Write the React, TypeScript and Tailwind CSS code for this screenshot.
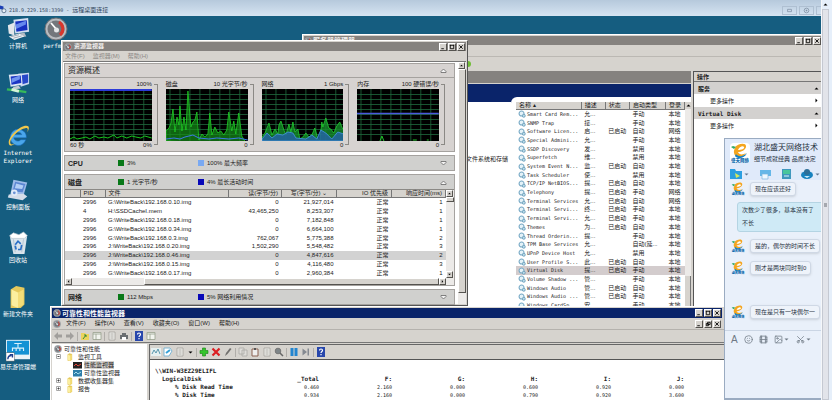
import type { ReactNode } from 'react'
import { Film, Image as ImageIcon, Scissors, Smile } from 'lucide-react'

const services = [
  ['Smart Card Rem...', '允...', '', '手动', '本地'],
  ['SNMP Trap', '接...', '', '手动', '本地'],
  ['Software Licen...', '启...', '已启动', '自动', '网络'],
  ['Special Admini...', '允...', '', '手动', '本地'],
  ['SSDP Discovery', '发...', '', '禁用', '本地'],
  ['Superfetch', '维...', '', '禁用', '本地'],
  ['System Event N...', '监...', '已启动', '自动', '本地'],
  ['Task Scheduler', '使...', '', '禁用', '本地'],
  ['TCP/IP NetBIOS...', '提...', '已启动', '自动', '本地'],
  ['Telephony', '提...', '已启动', '手动', '网络'],
  ['Terminal Services', '允...', '已启动', '自动', '网络'],
  ['Terminal Servi...', '终...', '已启动', '手动', '本地'],
  ['Terminal Servi...', '允...', '已启动', '手动', '本地'],
  ['Themes', '为...', '已启动', '自动', '本地'],
  ['Thread Orderin...', '提...', '', '手动', '本地'],
  ['TPM Base Services', '允...', '', '自动(延...', '本地'],
  ['UPnP Device Host', '允...', '', '禁用', '本地'],
  ['User Profile S...', '此...', '已启动', '自动', '本地'],
  ['Virtual Disk', '提...', '已启动', '手动', '本地'],
  ['Volume Shadow ...', '管...', '', '手动', '本地'],
  ['Windows Audio', '管...', '已启动', '自动', '本地'],
  ['Windows Audio ...', '管...', '已启动', '手动', '本地'],
  ['Windows CardSp...', '安...', '', '手动', '本地'],
]

const diskRows = [
  ['2996', 'G:\\WriteBack\\192.168.0.10.img', '0', '21,927,014', '1'],
  ['4', 'H:\\SSDCacheI.mem', '43,465,250', '8,253,307', '1'],
  ['2996', 'G:\\WriteBack\\192.168.0.18.img', '0', '7,182,848', '1'],
  ['2996', 'G:\\WriteBack\\192.168.0.34.img', '0', '6,664,100', '1'],
  ['2996', 'G:\\WriteBack\\192.168.0.3.img', '762,067', '5,775,388', '2'],
  ['2996', 'J:\\WriteBack\\192.168.0.20.img', '1,502,290', '5,548,482', '3'],
  ['2996', 'J:\\WriteBack\\192.168.0.46.img', '0', '4,847,616', '2'],
  ['2996', 'J:\\WriteBack\\192.168.0.15.img', '0', '4,116,480', '3'],
  ['2996', 'G:\\WriteBack\\192.168.0.17.img', '0', '2,960,384', '1'],
]

const raised = 'bg-[#d6d3ce] border border-t-white border-l-white border-r-[#55534f] border-b-[#55534f]'

function CaptionButtons({ restore = false }: { restore?: boolean }) {
  const shapes = [
    { label: '最小化', d: 'M1.5 5.5h3' },
    { label: '最大化', d: restore ? 'M3 1.5h3v2.5h-3zM1.5 3h2.5v2.5h-2.5z' : 'M1 1.5h5M1.5 1v4.5h4V1' },
    { label: '关闭', d: 'M1.5 1.5l4 4M5.5 1.5l-4 4' },
  ]
  return (
    <div className="flex shrink-0 gap-px">
      {shapes.map((s) => (
        <button key={s.label} aria-label={s.label} className={`h-2 w-2 ${raised}`}>
          <svg viewBox="0 0 7 7" className="block h-full w-full" fill="none" stroke="#000" strokeWidth="1">
            <path d={s.d} />
          </svg>
        </button>
      ))}
    </div>
  )
}

function Arrow({ dir, className = '' }: { dir: 'up' | 'down' | 'left' | 'right'; className?: string }) {
  const d = {
    up: 'M1.5 4.5h4L3.500 2.500z',
    down: 'M1.5 2.500h4L3.500 4.500z',
    left: 'M4.500 1.500v4L2.500 3.500z',
    right: 'M2.500 1.500v4L4.500 3.500z',
  }[dir]
  return (
    <svg viewBox="0 0 7 7" className={`h-[7px] w-[7px] shrink-0 ${className}`}>
      <path d={d} />
    </svg>
  )
}

function GaugeIcon({ className = '' }: { className?: string }) {
  return (
    <svg viewBox="0 0 24 24" className={`shrink-0 ${className}`}>
      <circle cx="12" cy="12" r="11" fill="#b9bcc0" stroke="#6b6f74" />
      <circle cx="12" cy="12" r="8.5" fill="#73777c" />
      <path d="M15 5a8 8 0 0 1 1 13" fill="none" stroke="#d9362c" strokeWidth="3" />
      <path d="M7 6l6 7" stroke="#fff" strokeWidth="1.8" />
      <circle cx="12.500" cy="13" r="2.500" fill="#e4e6e8" />
    </svg>
  )
}

function ComputerIcon({ network = false }: { network?: boolean }) {
  return (
    <svg viewBox="0 0 26 26" className="h-6 w-6">
      {network ? (
        <>
          <path d="M13 3l12-1v12l-9 3z" fill="#c9d7ee" />
          <path d="M15 5l9-1.500v9l-7 2z" fill="#2747c9" />
          <path d="M3 4l14-1 1 12-13 2z" fill="#dce6f4" />
          <path d="M5 6l11-1 .6 8-10.600 1.800z" fill="#1b35c4" />
          <path d="M6 8l9-3v4l-9 4z" fill="#6f92ef" />
          <path d="M8 17l6-1 2 3-9 1z" fill="#c4cad3" />
          <path d="M1 20l9 1 12 2" stroke="#36b95a" strokeWidth="2.500" fill="none" />
          <path d="M6 20l8 2" stroke="#d4f4d8" strokeWidth="3" />
        </>
      ) : (
        <>
          <path d="M2 9l7-3v14l-6-2z" fill="#e3e6ea" />
          <path d="M8 3l16-2 1 15-15 2z" fill="#d2ddf0" />
          <path d="M10 5l12.500-1.500.8 10.500-12 2z" fill="#172fc0" />
          <path d="M10.500 8l11-4v4l-10.600 5z" fill="#6688ee" />
          <path d="M14 18l6-1 2 4-9 1z" fill="#b3bac4" />
          <path d="M3 21l11-3 6 3-11 4z" fill="#eef1f4" />
          <path d="M5 21.500l9-2.300M8 23l9-2.500" stroke="#9ba5b1" />
        </>
      )}
    </svg>
  )
}

function IeIcon() {
  return (
    <svg viewBox="0 0 26 26" className="h-6 w-6">
      <path d="M22 15H8.500c.3 3 5 5 7.500 2h5.500c-2 5-6 7-10 6-5-1-8-6-6.500-11C6.500 7 11 5 15 6c5 1 7.500 5 7 9zM9 11.500h8c-.5-3-6.500-4-8 0z" fill="#4aa6ea" stroke="#1467b8" strokeWidth=".6" />
      <path d="M4 23C-1 18 13 2 22 2c4 0 3 4 1 7 1-3 1-5-2-4.500C14 5 2 17 5 21.500c1 1.500 4 0 6-1-3 2-6 3.500-7 2.500z" fill="#f2c84b" />
    </svg>
  )
}

function PanelIcon() {
  return (
    <svg viewBox="0 0 26 26" className="h-6 w-6">
      <path d="M8 2l15 3-4 14-15 2z" fill="#9dbbe8" />
      <path d="M10 4l11 2.500-3 9-11-1z" fill="#5b86d2" />
      <path d="M11 6l8 2-1.500 4-8-1z" fill="#b3cff5" />
      <path d="M3 18l16-1 4 3-5 4-16-3z" fill="#d5dde9" />
      <circle cx="9" cy="16" r="3.500" fill="#e2ebf8" />
      <circle cx="9" cy="16" r="1.500" fill="#6b92d4" />
    </svg>
  )
}

function BinIcon() {
  return (
    <svg viewBox="0 0 26 26" className="h-6 w-6">
      <path d="M4 5h19l-3 20H8z" fill="#d9e4ec" />
      <path d="M4 5l4-3 6 2 5-3 4 4-3 3H6z" fill="#fff" stroke="#aebdc9" strokeWidth=".7" />
      <path d="M8 9l2 14M19 9l-2 14" stroke="#b3c3d0" />
      <path d="M10 15l3-4 3 3M17 15l-1 5h-3M11 20l-1-4" stroke="#2b70c7" strokeWidth="1.800" fill="none" />
    </svg>
  )
}

function FolderIcon({ className = 'h-6 w-6' }: { className?: string }) {
  return (
    <svg viewBox="0 0 26 26" className={`shrink-0 ${className}`}>
      <path d="M5 5l6-4 9 2v18l-4 4H5z" fill="#e5c95c" />
      <path d="M6 5l7 3v17l-7-3z" fill="#fbef9f" />
      <path d="M13 8l6-3v16l-6 4z" fill="#f3dd78" />
    </svg>
  )
}

function ShortcutIcon() {
  return (
    <svg viewBox="0 0 26 26" className="h-6 w-6">
      <rect x="0" y="2" width="26" height="21" fill="#e9f3f8" />
      <rect x="1" y="3" width="24" height="15" fill="#1492d4" />
      <path d="M9 6h8M13 6v5M7 14v-3h12v3M11 11v3M15 11v3" stroke="#d9f1fc" strokeWidth="1.200" fill="none" />
      <rect x="0" y="16" width="9" height="9" fill="#fff" stroke="#555" strokeWidth=".5" />
      <path d="M2 23c0-3 1-4 4-4M4 18h3v3" stroke="#1e3f8f" strokeWidth="1.500" fill="none" />
    </svg>
  )
}

const desktopIcons: { label: string; icon: ReactNode }[] = [
  { label: '计算机', icon: <ComputerIcon /> },
  { label: '网络', icon: <ComputerIcon network /> },
  { label: 'Internet Explorer', icon: <IeIcon /> },
  { label: '控制面板', icon: <PanelIcon /> },
  { label: '回收站', icon: <BinIcon /> },
  { label: '新建文件夹', icon: <FolderIcon /> },
  { label: '易乐游管理端', icon: <ShortcutIcon /> },
]

function DesktopIcon({ label, icon }: { label: string; icon: ReactNode }) {
  return (
    <button className="flex w-9 flex-col items-center gap-px text-white">
      {icon}
      <span className="w-full text-center font-['DejaVu_Sans_Mono','Noto_Sans_CJK_SC',monospace] text-[6px] leading-2">{label}</span>
    </button>
  )
}

function Chart({ title, max, min, left, children }: { title: string; max: string; min: string; left?: string; children: ReactNode }) {
  return (
    <div className="flex flex-1 gap-[2px]">
      <div className="min-w-0 flex-1">
        <div className="flex h-[10px] items-center justify-between whitespace-nowrap">
          <span>{title}</span>
          <span>{max}</span>
        </div>
        <svg viewBox="0 0 82 52" preserveAspectRatio="none" className="block h-[52px] w-full bg-black">
          <path
            d="M4 0v52M14 0v52M24 0v52M34 0v52M44 0v52M54 0v52M64 0v52M74 0v52M0 5.500h82M0 10.500h82M0 15.500h82M0 20.500h82M0 25.500h82M0 30.500h82M0 35.500h82M0 40.500h82M0 45.500h82"
            stroke="#1f6a3e"
            strokeWidth=".8"
          />
          {children}
        </svg>
        <div className="flex h-[9px] items-center justify-between">
          <span>{left}</span>
          <span>{min}</span>
        </div>
      </div>
      <div className="my-[5px] w-1 border-y border-r border-[#8b8985]" />
    </div>
  )
}

function Section({ title, a, b, aColor, bColor, open = false }: { title: string; a: string; b: string; aColor: string; bColor: string; open?: boolean }) {
  return (
    <button className="flex h-[14px] w-full items-center whitespace-nowrap pr-[7px] pl-[3px] text-left">
      <span className="w-[50px] text-[7px] font-bold">{title}</span>
      <span className="flex w-20 items-center gap-[3px]">
        <i className={`h-[6px] w-[6px] ${aColor}`} />
        {a}
      </span>
      <span className="flex flex-1 items-center gap-[3px]">
        <i className={`h-[6px] w-[6px] ${bColor}`} />
        {b}
      </span>
      <Collapse open={open} />
    </button>
  )
}

function Collapse({ open }: { open: boolean }) {
  return (
    <svg viewBox="0 0 7 7" className="h-[7px] w-[7px]" fill="#f4f4f4" stroke="#666" strokeWidth=".8">
      <path d={open ? 'M1 4.500L3.500 2 6 4.500v1H1z' : 'M1 2.500L3.500 5 6 2.500v-1H1z'} />
    </svg>
  )
}

function ResourceMonitor() {
  return (
    <section className="absolute top-[40px] left-[61px] flex h-[266px] w-[407px] flex-col border border-t-white border-l-white border-r-[#555] border-b-[#555] bg-[#d6d3ce] p-px">
      <div className="flex h-[9px] shrink-0 items-center gap-[2px] bg-[#85827f] px-px text-[#f0eeec]">
        <GaugeIcon className="h-2 w-2" />
        <h2 className="flex-1 text-[6px] font-bold">资源监视器</h2>
        <CaptionButtons />
      </div>
      <div className="flex h-[10px] shrink-0 items-center gap-2 px-[2px] text-[#8d8a87]">
        <button>文件(F)</button>
        <button>监视器(M)</button>
        <button>帮助(H)</button>
      </div>
      <div className="flex min-h-0 flex-1 border-t border-[#777] bg-white">
        <div className="flex min-w-0 flex-1 flex-col gap-[3px] pt-px pl-px">
          <div className="shrink-0 border border-[#a5a29f] bg-[#d7d3d1]">
            <button className="flex h-[14px] w-full items-center justify-between border-b border-[#a5a29f] pr-[7px] pl-[3px] text-[8px]">
              资源概述
              <Collapse open />
            </button>
            <div className="flex gap-2 px-[5px] py-px pr-[9px]">
              <Chart title="CPU" max="100%" min="0%" left="60 秒">
                <path d="M0 1h82" stroke="#2c3bd8" strokeWidth="2" />
                <path d="M0 50l4-2 3 2 5-1 4-1 4 2 5-3 4 2 5-1 4 1 6-3 3 3 5-2 5 2 5-2 4 1 5 1 4-2 7 2" fill="none" stroke="#19c51e" />
              </Chart>
              <Chart title="磁盘" max="10 光字节/秒" min="0">
                <path
                  d="M0 52V42l3-3 2-5 2-14 2 23 2-15 2 8 1-19 2 25 2-14 2 13 2-39 3 36 2-5 2-2 2-8 2 28 3-6 3 3 3-3 2-21 2 22 3-8 3 6 3-2 3 4 3-5 2-18 3 19 2-10 2 13 3-21 3 23 3 5 1 3z"
                  fill="#168e18"
                  fillOpacity=".7"
                  stroke="#20cf24"
                  strokeWidth=".8"
                />
                <path d="M0 50l8-1 6 1 5-2 8-2 6 3 10 1 8-1 12 1 10-1 9 2" fill="none" stroke="#3d78e8" />
              </Chart>
              <Chart title="网络" max="1 Gbps" min="0">
                <path
                  d="M0 48l3-4 4-10 3 12 3-6 3 5 1-9 2-4 3 9 2 5 3-11 2 8 2-10 2 10 3-3 2 10 3-2 3-4 3 4 3-2 3-7 3 11 2 2 2-19 1 5 3-9 3 10 2 1 3 4 3-7 3-4 3 7 3-4v17H0z"
                  fill="#158b2a"
                  fillOpacity=".8"
                  stroke="#22cf2e"
                  strokeWidth=".8"
                />
                <path d="M0 50l5-6 5 5 5-4 6 1 5-3 5 1 3 5 10 1 6-4 5 4 4-9 5 3 6 6 6-7 6 2v7H0z" fill="#2463aa" fillOpacity=".8" stroke="#4696e6" strokeWidth=".8" />
              </Chart>
              <Chart title="内存" max="100 硬错误/秒" min="0">
                <path d="M0 24.500h82" stroke="#4a58dc" strokeWidth="1.500" />
                <path d="M23 52l2-5 2 5M56 51h4M70 51h2" fill="none" stroke="#22c52a" />
              </Chart>
            </div>
          </div>
          <div className="shrink-0 border border-[#a5a29f] bg-[#d0d0ce]">
            <Section title="CPU" a="3%" b="100% 最大频率" aColor="bg-[#087818]" bColor="bg-[#79a9f2]" />
          </div>
          <div className="shrink-0 border border-[#a5a29f] bg-[#d0d0ce]">
            <Section title="磁盘" a="1 光字节/秒" b="4% 最长活动时间" aColor="bg-[#087818]" bColor="bg-[#0808b8]" open />
            <div className="flex border-t border-[#8b8985] bg-white">
              <table className="h-[88px] min-w-0 flex-1 table-fixed border-collapse whitespace-nowrap">
                <thead className="bg-[#d6d3ce]">
                  <tr className="[&>th]:border-r [&>th]:border-b [&>th]:border-[#777] [&>th]:px-[3px] [&>th]:font-normal">
                    <th className="w-[15px]" />
                    <th className="w-[25px] text-left">PID</th>
                    <th className="text-left">文件</th>
                    <th className="w-[53px] text-right">读(字节/分)</th>
                    <th className="w-[55px] text-center">写(字节/分) ⌄</th>
                    <th className="w-[55px] text-right">IO 优先级</th>
                    <th className="w-[54px] text-right">响应时间(ms)</th>
                  </tr>
                </thead>
                <tbody>
                  {diskRows.map(([pid, file, read, write, ms], i) => (
                    <tr key={file} className={i === 6 ? 'bg-[#d2d2d2]' : ''}>
                      <td />
                      <td className="px-[3px]">{pid}</td>
                      <td className="px-[3px]">{file}</td>
                      <td className="px-[3px] text-right">{read}</td>
                      <td className="px-[3px] text-right">{write}</td>
                      <td className="px-[3px] text-right">正常</td>
                      <td className="px-[3px] text-right">{ms}</td>
                    </tr>
                  ))}
                </tbody>
              </table>
              <div className="flex w-2 flex-col justify-between bg-[#eceae8]">
                <div>
                  <Arrow dir="up" className={raised} />
                  <div className={`h-[5px] ${raised}`} />
                </div>
                <Arrow dir="down" className={raised} />
              </div>
            </div>
            <div className="flex h-[7px] justify-between bg-[#eceae8] pr-2">
              <Arrow dir="left" className={raised} />
              <div className={`ml-[72px] flex-1 ${raised}`} />
              <Arrow dir="right" className={raised} />
            </div>
          </div>
          <div className="shrink-0 border border-[#a5a29f] bg-[#d0d0ce]">
            <Section title="网络" a="112 Mbps" b="5% 网络利用情况" aColor="bg-[#087818]" bColor="bg-[#0808b8]" />
          </div>
        </div>
        <div className="ml-[3px] flex w-2 flex-col bg-[#eceae8] pb-[11px]">
          <Arrow dir="up" className={raised} />
          <div className={`flex-1 ${raised}`} />
        </div>
      </div>
    </section>
  )
}

function ServiceIcon() {
  return (
    <svg viewBox="0 0 9 9" className="h-2 w-2 shrink-0">
      <circle cx="4" cy="4" r="2.800" fill="#e4f2f8" stroke="#77a9c5" strokeWidth="1.200" />
      <circle cx="6.500" cy="6.500" r="1.700" fill="#b9dbe9" stroke="#5d93b2" strokeWidth=".8" />
    </svg>
  )
}

function ServerManager() {
  return (
    <section className="absolute top-[34px] right-0 bottom-0 left-[302px] flex flex-col border-t border-l border-white bg-[#d6d3ce] pt-px pl-px">
      <div className="flex h-[9px] shrink-0 items-center gap-px bg-[#85827f] text-[#f0eeec]">
        <GaugeIcon className="h-2 w-2" />
        <h2 className="flex-1 text-[7px] font-bold">服务器管理器</h2>
        <CaptionButtons />
      </div>
      <div className="h-3 shrink-0 border-b border-[#bbb8b3]" />
      <div className="flex h-[14px] shrink-0 items-center pl-[161px]">
        <i className="h-[6px] w-[6px] rounded-full bg-[#6fbd35]" />
      </div>
      <div className="flex min-h-0 flex-1 gap-[2px]">
        <div className="flex min-w-0 flex-1 flex-col">
          <div className="h-3 shrink-0 bg-[#85827f]" />
          <div className="mt-px flex min-h-0 flex-1 bg-[#0a246a] pt-[13px]">
            <p className="mt-[5px] flex-1 bg-white pt-[54px] pr-[3px] text-right">文件系统和存储</p>
            <div className="flex w-[180px] rounded-tl-md bg-white pt-[5px] pl-[5px]">
              <table className="h-[208px] min-w-0 flex-1 table-fixed border-collapse whitespace-nowrap">
                <thead className="bg-[#d6d3ce]">
                  <tr className="[&>th]:border-r [&>th]:border-b [&>th]:border-[#777] [&>th]:px-[3px] [&>th]:text-left [&>th]:font-normal">
                    <th className="w-[66px]">名称 ▴</th>
                    <th className="w-[25px]">描述</th>
                    <th className="w-[25px]">状态</th>
                    <th className="w-[37px]">启动类型</th>
                    <th className="overflow-hidden">登录</th>
                  </tr>
                </thead>
                <tbody>
                  {services.map(([name, desc, state, start, logon], i) => (
                    <tr key={i} className={i === 18 ? 'bg-[#d3cccd]' : ''}>
                      <td className="pl-[2px]">
                        <span className="flex h-2 items-center gap-px font-['DejaVu_Sans_Mono',monospace] text-[5px]">
                          <ServiceIcon />
                          {name}
                        </span>
                      </td>
                      <td className="pl-[3px]">{desc}</td>
                      <td className="pl-[3px]">{state}</td>
                      <td className="pl-[3px]">{start}</td>
                      <td className="pl-[3px]">{logon}</td>
                    </tr>
                  ))}
                </tbody>
              </table>
              <div className="flex w-[6px] flex-col justify-between bg-[#eceae8]">
                <Arrow dir="up" className="bg-[#d6d3ce]" />
                <div className="h-[124px] border-r border-[#777] bg-[#d6d3ce]" />
              </div>
            </div>
          </div>
        </div>
        <aside className="w-[128px] border-t border-l border-[#555] bg-white font-['DejaVu_Sans_Mono','Noto_Sans_CJK_SC',monospace]">
          <h3 className="flex h-[10px] items-center border-b border-[#777] bg-[#d6d3ce] pl-[3px] font-bold">操作</h3>
          {['服务', 'Virtual Disk'].map((name) => (
            <div key={name}>
              <button className="flex h-3 w-full items-center justify-between bg-[#d3d1cf] pr-px pl-1 font-bold">
                {name}
                <Arrow dir="up" />
              </button>
              <button className="flex h-[13px] w-full items-center justify-between pr-px pl-4">
                更多操作
                <Arrow dir="right" />
              </button>
            </div>
          ))}
        </aside>
      </div>
    </section>
  )
}

function Tool({ label, children }: { label: string; children: ReactNode }) {
  return (
    <button aria-label={label} className="h-[10px] w-[10px] shrink-0">
      <svg viewBox="0 0 10 10" className="block h-full w-full">
        {children}
      </svg>
    </button>
  )
}

const sheet = <path d="M2 1h6v8H2zM3.500 3h3M3.500 5h3M3.500 7h3" fill="#ecebe8" stroke="#a3a19d" strokeWidth=".8" />
const grid = <path d="M1 1.500h8v7H1zM1 3h8M4 3v6" fill="#f2f4ee" stroke="#98a18e" strokeWidth=".8" />
const help = (
  <>
    <rect x="1" width="8" height="10" fill="#2847ac" />
    <path d="M3.500 3.500c0-2 3-2 3 0 0 1-1.500 1-1.500 2.500M5 7v1.200" fill="none" stroke="#fff" strokeWidth="1.200" />
  </>
)

function Separator() {
  return <i className="h-[9px] w-px shrink-0 bg-[#b0ada9]" />
}

function ReportTable() {
  const rows = [
    ['% Disk Read Time', '0.460', '2.160', '0.000', '0.600', '0.920', '0.000'],
    ['% Disk Time', '0.934', '2.160', '0.000', '0.790', '0.920', '3.600'],
  ]
  return (
    <table className="w-[529px] table-fixed border-collapse whitespace-nowrap font-['DejaVu_Sans_Mono',monospace] leading-2">
      <colgroup>
        <col className="w-[91px]" />
        <col span={6} />
      </colgroup>
      <thead>
        <tr>
          <th colSpan={7} className="text-left">\\WIN-W3EZ29ELIFL</th>
        </tr>
        <tr className="text-right">
          <th className="pl-[7px] text-left">LogicalDisk</th>
          {['_Total', 'F:', 'G:', 'H:', 'I:', 'J:'].map((d) => (
            <th key={d}>{d}</th>
          ))}
        </tr>
      </thead>
      <tbody>
        {rows.map(([name, ...values]) => (
          <tr key={name}>
            <th className="pl-5 text-left">{name}</th>
            {values.map((v, i) => (
              <td key={i} className="text-right text-[5px]">{v}</td>
            ))}
          </tr>
        ))}
      </tbody>
    </table>
  )
}

function PerformanceMonitor() {
  return (
    <section className="absolute bottom-0 left-[50px] flex h-[94px] w-[674px] flex-col border-t border-l border-white bg-[#d6d3ce] pt-px pl-px">
      <div className="mr-[2px] flex h-[10px] shrink-0 items-center gap-px bg-[#0a246a] px-px text-white">
        <GaugeIcon className="h-2 w-2" />
        <h2 className="flex-1 text-[7px] font-bold">可靠性和性能监视器</h2>
        <CaptionButtons />
      </div>
      <div className="flex h-3 shrink-0 items-center gap-[9px] border-b border-[#b5b2ad] pr-[3px] pl-px">
        <GaugeIcon className="-mr-1 h-2 w-2" />
        {['文件(F)', '操作(A)', '查看(V)', '收藏夹(O)', '窗口(W)', '帮助(H)'].map((m) => (
          <button key={m}>{m}</button>
        ))}
        <div className="ml-auto">
          <CaptionButtons restore />
        </div>
      </div>
      <div className="flex h-[13px] shrink-0 items-center gap-[2px] border-b border-[#777] pl-px">
        <Tool label="后退"><path d="M1 5l4-4v2.500h4v3H5V9z" fill="#a19f9c" /></Tool>
        <Tool label="前进"><path d="M9 5L5 1v2.500H1v3h4V9z" fill="#a19f9c" /></Tool>
        <Separator />
        <Tool label="向上"><path d="M1 2h4l1 1h3v6H1z" fill="#ecd35c" /><path d="M3 8l3-4M4 4h2v2" fill="none" stroke="#378a37" /></Tool>
        <Tool label="显示树">{grid}</Tool>
        <Separator />
        <Tool label="导出">{sheet}</Tool>
        <Tool label="打印"><path d="M1 4h8v4H1zM3 2h4v2H3z" fill="#6b6f72" /><path d="M3 6h4v3H3z" fill="#fff" /></Tool>
        <Separator />
        <Tool label="帮助">{help}</Tool>
        <Tool label="窗格">{grid}</Tool>
      </div>
      <div className="mt-px flex min-h-0 flex-1 gap-[2px]">
        <ul className="w-[95px] shrink-0 bg-white pt-px leading-2">
          <li className="flex items-center gap-[2px] pl-[2px]"><GaugeIcon className="h-2 w-2" />可靠性和性能</li>
          <li className="flex items-center gap-1 pl-1"><TreeBox open /><FolderIcon className="h-2 w-2" />监视工具</li>
          <li className="flex items-center gap-[2px] pl-[21px]"><MonitorIcon red /><span className="bg-[#d6d3ce]">性能监视器</span></li>
          <li className="flex items-center gap-[2px] pl-[21px]"><MonitorIcon />可靠性监视器</li>
          <li className="flex items-center gap-1 pl-1"><TreeBox /><FolderIcon className="h-2 w-2" />数据收集器集</li>
          <li className="flex items-center gap-1 pl-1"><TreeBox /><FolderIcon className="h-2 w-2" />报告</li>
        </ul>
        <div className="flex min-w-0 flex-1 flex-col border-t border-l border-[#666] bg-white">
          <div className="flex h-[15px] shrink-0 items-center gap-[2px] border-b border-[#555] bg-[#d6d3ce] pl-px">
            <Tool label="查看当前活动"><path d="M0 1h10v8H0z" fill="#e6f0f1" /><path d="M1 7l2-4 2 3 2-4 2 5" fill="none" stroke="#5b97ad" /></Tool>
            <Tool label="查看日志数据"><path d="M1 1h6l2 3-3 5H1z" fill="#fff" stroke="#7db6d4" /><path d="M3 6l4-3" stroke="#36a1d7" strokeWidth="2" /></Tool>
            <Tool label="图形类型">{sheet}</Tool>
            <Arrow dir="down" />
            <Separator />
            <Tool label="添加"><path d="M3.500 1h3v2.500H9v3H6.500V9h-3V6.500H1v-3h2.500z" fill="#35c52d" stroke="#188315" strokeWidth=".6" /></Tool>
            <Tool label="删除"><path d="M1.500 1.500l7 7M8.500 1.500l-7 7" stroke="#db1f23" strokeWidth="2.200" /></Tool>
            <Tool label="突出显示"><path d="M2 9l1-3 4-5 1.500 1-4 5z" fill="#71706e" /></Tool>
            <Separator />
            <Tool label="复制"><path d="M1 1h5v6H1zM4 3h5v6H4z" fill="#dedcd9" stroke="#aaa8a4" strokeWidth=".8" /></Tool>
            <Tool label="粘贴"><path d="M2 2h6v7H2z" fill="#eee" stroke="#8b6253" /><path d="M4 1h2v2H4z" fill="#555" /></Tool>
            <Tool label="属性">{sheet}</Tool>
            <Tool label="缩放"><circle cx="4" cy="4" r="2.800" fill="#7e8588" stroke="#777" /><path d="M6 6l3 3" stroke="#666" strokeWidth="1.500" /></Tool>
            <Separator />
            <Tool label="冻结显示"><path d="M1.500 1h3v8h-3zM5.500 1h3v8h-3z" fill="#2385cf" /></Tool>
            <Tool label="更新数据"><path d="M1.500 1.500L6 5 1.500 8.500zM6.500 1.500h1.500v7H6.500z" fill="#858a91" /></Tool>
            <Separator />
            <Tool label="帮助">{help}</Tool>
          </div>
          <div className="pt-[7px] pl-[5px]">
            <ReportTable />
          </div>
        </div>
      </div>
    </section>
  )
}

function TreeBox({ open = false }: { open?: boolean }) {
  return (
    <svg viewBox="0 0 6 6" className="h-[6px] w-[6px] shrink-0" fill="none" strokeWidth="1">
      <path d="M.5.500h4v4h-4z" stroke="#a8a8a8" />
      <path d={open ? 'M1.500 2.500h2' : 'M1.500 2.500h2M2.500 1.500v2'} stroke="#444" />
    </svg>
  )
}

function MonitorIcon({ red = false }: { red?: boolean }) {
  return (
    <svg viewBox="0 0 9 7" className="h-[7px] w-[9px] shrink-0">
      <rect width="9" height="6.500" fill={red ? '#222' : '#2d7da9'} />
      <path d="M1 4l2-2 2 2 3-2" fill="none" stroke={red ? '#e2463b' : '#a6dbed'} />
    </svg>
  )
}

function CompanyLogo({ className = '' }: { className?: string }) {
  return (
    <svg viewBox="0 0 20 20" className={`shrink-0 ${className}`}>
      <path d="M4 5C8 0 17-1 16 4c-.5 3-5 5-8 5 1 3 5 3 8 1-3 5-11 6-12 0-.3-2 0-3.500 2-6z" fill="#f4a51f" />
      <path d="M8 7c1-3 5-5 6-3s-3 3-6 3z" fill="#fff" />
      <path d="M6 11c2 3 7 3 11-1-2 5-9 7-12 3z" fill="#1482c7" />
      <path d="M3 3l3 1-2 2-3-2z" fill="#35aa67" />
      <text x="10" y="19" textAnchor="middle" fontSize="4.500" fontWeight="900" fill="#176fb0">盛天网络</text>
    </svg>
  )
}

function Message({ children }: { children: ReactNode }) {
  return (
    <div className="flex items-center gap-[5px] pl-[6px]">
      <CompanyLogo className="h-[14px] w-[14px]" />
      <p className="rounded-[3px] border border-[#cfd8e5] bg-[#eef3fa] px-1 leading-3 shadow-sm">{children}</p>
    </div>
  )
}

function ChatWindow() {
  return (
    <section className="absolute top-[138px] right-0 bottom-0 flex w-[97px] flex-col overflow-hidden border border-r-0 border-[#9aabc1] bg-[#e9f0fa] whitespace-nowrap text-[#26313e]">
      <header className="flex shrink-0 gap-1 bg-[#e0eafa] pt-1 pb-[3px] pl-[5px]">
        <CompanyLogo className="h-5 w-5 rounded-sm bg-white" />
        <div>
          <h2 className="text-[8px] leading-[10px]">湖北盛天网络技术</h2>
          <p className="text-[6px] leading-3">细节成就经典 品质决定</p>
        </div>
      </header>
      <div className="flex h-3 shrink-0 items-center gap-[9px] bg-[#e0eafa] pl-[5px]">
        <button aria-label="发送文件" className="flex items-center gap-px">
          <svg viewBox="0 0 12 12" className="h-3 w-3"><path d="M0 1h5l1 2h6v8H0z" fill="#2b9ee0" /><path d="M5 5l5 3-4 2z" fill="#d7e95b" /></svg>
          <Arrow dir="down" className="fill-[#60758e]" />
        </button>
        <button aria-label="远程演示"><svg viewBox="0 0 12 12" className="h-3 w-3"><path d="M1 2h11v6H1z" fill="#65b7e8" /><path d="M3 6h6v5H3z" fill="#edf8ff" stroke="#7db4dc" strokeWidth=".7" /></svg></button>
        <button aria-label="应用"><svg viewBox="0 0 12 12" className="h-3 w-3"><path d="M2 1h9v10H2z" fill="#3f97bd" /><path d="M3 2h7v4H3z" fill="#49c59b" /><path d="M4 8h5" stroke="#dff5f5" /></svg></button>
        <button aria-label="远程协助" className="flex items-center gap-px">
          <svg viewBox="0 0 12 12" className="h-3 w-3"><ellipse cx="6" cy="7" rx="6" ry="4" fill="#1681be" /><circle cx="6" cy="4" r="3" fill="#2c6e98" /><path d="M3 8h6l-3 2z" fill="#c8e9f9" /></svg>
          <Arrow dir="down" className="fill-[#60758e]" />
        </button>
      </div>
      <div className="flex h-[151px] shrink-0 flex-col items-start gap-2 border-b border-[#cad5e4] pt-[2px]">
        <Message>现在应该还好</Message>
        <p className="-mt-[2px] -mb-px ml-3 w-full rounded-[3px] border border-[#b4d4e3] bg-[#cfeaf6] px-1 py-px leading-[13px]">
          次数少了很多，基本没有了<br />不长
        </p>
        <Message>是的，偶尔的时间不长</Message>
        <Message>刚才是两块同时到0</Message>
        <div className="mt-auto pb-[11px]">
          <Message>现在是只有一块偶尔一</Message>
        </div>
      </div>
      <div className="flex h-4 shrink-0 items-center gap-[6px] pl-[6px] text-[#6f7984]">
        <button className="text-[10px]">A</button>
        <button aria-label="表情"><Smile size={9} /></button>
        <button aria-label="魔法表情"><Film size={9} /></button>
        <button aria-label="图片" className="flex items-center"><ImageIcon size={9} /><Arrow dir="down" className="fill-[#6f7984]" /></button>
        <button aria-label="截图" className="flex items-center"><Scissors size={9} className="-rotate-90" /><Arrow dir="down" className="fill-[#6f7984]" /></button>
      </div>
      <textarea aria-label="消息" className="min-h-0 w-full flex-1 resize-none border-b border-[#9aabc1] bg-transparent" />
    </section>
  )
}

export default function App() {
  return (
    <div className="flex h-screen w-full overflow-hidden font-['Liberation_Sans','Noto_Sans_CJK_SC',sans-serif] text-[6px] leading-[7px] text-[#222]">
      <main className="relative flex min-w-0 flex-1 flex-col overflow-hidden bg-[#155d80]">
        <header className="flex h-4 shrink-0 items-center gap-[2px] bg-linear-to-b from-[#b6c9dc] to-[#d6e4f2]">
          <svg viewBox="0 0 8 10" className="mt-[2px] h-[10px] w-[7px]">
            <path d="M0 1l4 1v4L0 5z" fill="#1b3fb5" />
            <circle cx="4.500" cy="7" r="2.300" fill="#e9eff6" stroke="#55708c" />
          </svg>
          <h1 className="flex-1 pt-1 text-[#33475c]">
            <span className="font-['DejaVu_Sans_Mono',monospace] text-[5px]">218.9.229.158:3390 - </span>
            远程桌面连接
          </h1>
          <div className="mt-[5px] flex h-[9px] shrink-0 text-[#8192a5]">
            <button aria-label="最小化" className="w-[15px] border border-[#afc0d2]"><svg viewBox="0 0 15 9" className="block h-full w-full"><path d="M5 3h5v3H5z" fill="none" stroke="currentColor" /></svg></button>
            <button aria-label="还原" className="ml-[2px] w-[15px] border border-[#afc0d2]"><svg viewBox="0 0 15 9" className="block h-full w-full"><circle cx="7.500" cy="4.500" r="3" fill="none" stroke="currentColor" /><path d="M6.500 3.500h2v2h-2z" fill="currentColor" /></svg></button>
            <button aria-label="关闭" className="ml-[2px] w-[5px] border border-r-0 border-[#afc0d2]" />
          </div>
        </header>
        <div className="flex min-h-0 flex-1 items-start gap-[2px] overflow-hidden pt-px">
          <nav className="grid h-[375px] auto-rows-fr">
            {desktopIcons.map((item) => (
              <DesktopIcon key={item.label} label={item.label} icon={item.icon} />
            ))}
          </nav>
          <DesktopIcon label="perfmon" icon={<GaugeIcon className="h-6 w-6" />} />
        </div>
        <ServerManager />
        <ResourceMonitor />
        <PerformanceMonitor />
        <ChatWindow />
      </main>
      <div className="flex w-[11px] shrink-0 flex-col border-l border-[#f5f7fa] bg-[#e6effa] pr-[3px]">
        <Arrow dir="up" className="my-px" />
        <div className="flex flex-1 items-center justify-center border border-[#c5c9d2] bg-[#e2e4ea]">
          <i className="h-1 w-[3px] bg-[#a5a8af]" />
        </div>
      </div>
    </div>
  )
}
